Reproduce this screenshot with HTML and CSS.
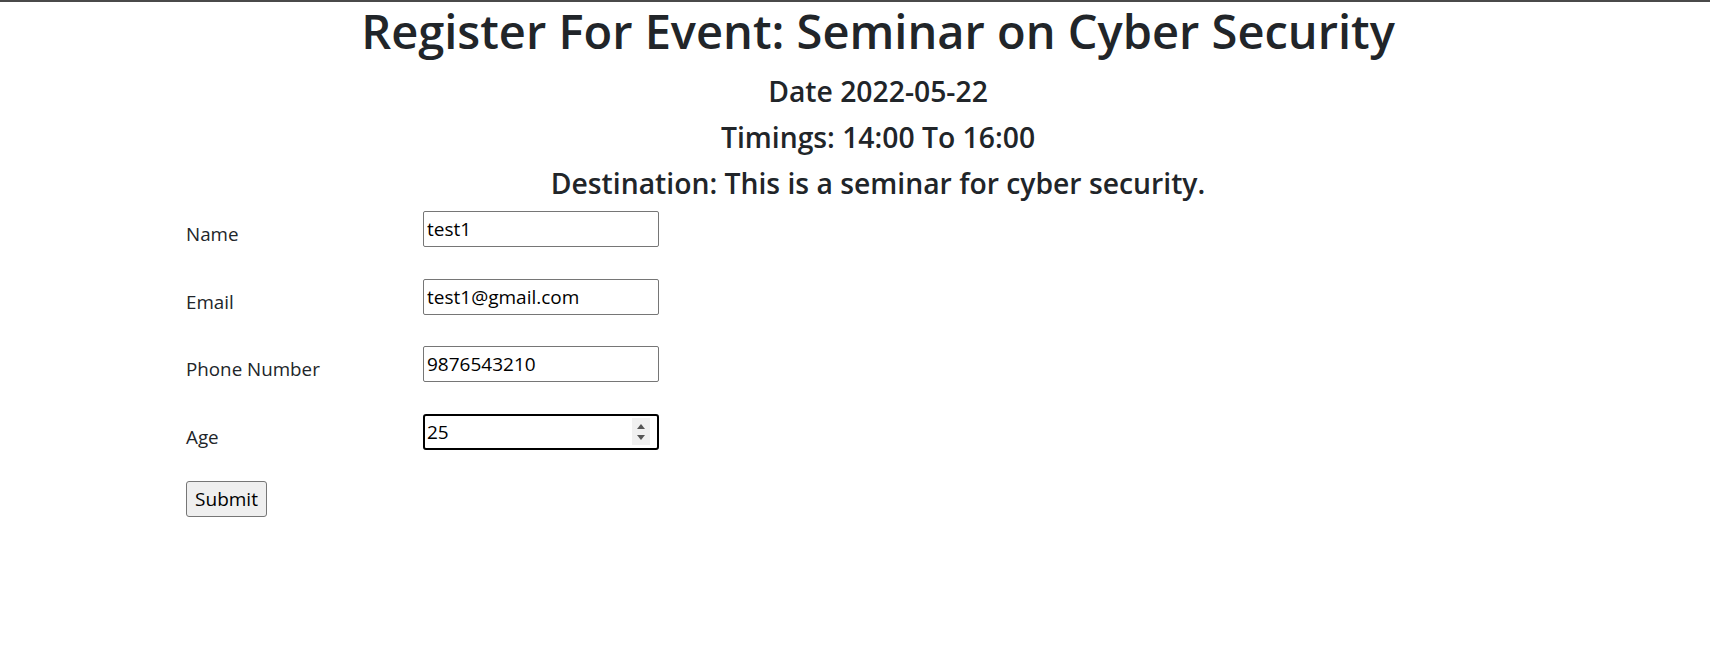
FILE: index.html
```html
<!DOCTYPE html>
<html lang="en">
<head>
<meta charset="utf-8">
<title>Register For Event</title>
<link rel="stylesheet" href="styles.css">
</head>
<body>
<div class="topline"></div>
<header class="event-head">
  <h1 class="title">Register For Event: Seminar on Cyber Security</h1>
  <h4 class="sub">Date 2022-05-22</h4>
  <h4 class="sub">Timings: 14:00 To 16:00</h4>
  <h4 class="sub">Destination: This is a seminar for cyber security.</h4>
</header>
<form class="reg-form">
  <div class="row">
    <label class="lbl" for="name">Name</label>
    <input class="field" id="name" type="text" value="test1">
  </div>
  <div class="row">
    <label class="lbl" for="email">Email</label>
    <input class="field" id="email" type="text" value="test1@gmail.com">
  </div>
  <div class="row">
    <label class="lbl" for="phone">Phone Number</label>
    <input class="field" id="phone" type="text" value="9876543210">
  </div>
  <div class="row">
    <label class="lbl" for="age">Age</label>
    <div class="numbox">
      <input class="numfield" id="age" type="text" value="25">
      <span class="spin"><span class="up"></span><span class="down"></span></span>
    </div>
  </div>
  <div class="actions">
    <button class="submit" type="button">Submit</button>
  </div>
</form>
</body>
</html>
```
FILE: styles.css
```css
html, body {
  margin: 0;
  padding: 0;
  background: #fff;
}
body {
  font-family: "Open Sans", "Noto Sans", sans-serif;
  color: #212529;
}
.topline {
  height: 2px;
  background: #4a4a4a;
}
.event-head {
  padding-left: 46px;
  text-align: center;
}
.title {
  margin: -1px 0 12px 0;
  font-size: 47px;
  line-height: 60px;
  font-weight: 560;
}
.sub {
  margin: 0 0 10px 0;
  font-size: 28.3px;
  line-height: 36px;
  font-weight: 570;
}
.reg-form {
  padding-left: 186px;
  display: flex;
  flex-direction: column;
  gap: 31.5px;
}
.row {
  display: grid;
  grid-template-columns: 237px 236px;
  align-items: start;
}
.lbl {
  font-size: 18.8px;
  line-height: 25px;
  padding-top: 11px;
}
.field {
  box-sizing: border-box;
  width: 236px;
  height: 36px;
  margin: 0;
  border: 1px solid #767676;
  border-radius: 2px;
  padding: 0 3px;
  font-family: inherit;
  font-size: 19px;
  color: #000;
  background: #fff;
}
.numbox {
  box-sizing: border-box;
  width: 236px;
  height: 36px;
  border: 2px solid #000;
  border-radius: 3px;
  display: flex;
  align-items: center;
  padding: 0 7px 0 2px;
}
.numfield {
  flex: 1;
  min-width: 0;
  border: 0;
  outline: none;
  padding: 0;
  margin: 0;
  font-family: inherit;
  font-size: 19px;
  color: #000;
  background: transparent;
}
.spin {
  width: 18px;
  height: 27px;
  background: #f0f0f0;
  display: flex;
  flex-direction: column;
  align-items: center;
  justify-content: center;
  gap: 6px;
}
.up {
  width: 0;
  height: 0;
  border-left: 4.5px solid transparent;
  border-right: 4.5px solid transparent;
  border-bottom: 5px solid #555;
}
.down {
  width: 0;
  height: 0;
  border-left: 4.5px solid transparent;
  border-right: 4.5px solid transparent;
  border-top: 5px solid #555;
}
.actions {
  display: flex;
}
.submit {
  box-sizing: border-box;
  width: 81px;
  height: 36px;
  margin: 0;
  padding: 0 8px;
  font-family: inherit;
  font-size: 19px;
  color: #000;
  background: #efefef;
  border: 1px solid #767676;
  border-radius: 3px;
}
```
